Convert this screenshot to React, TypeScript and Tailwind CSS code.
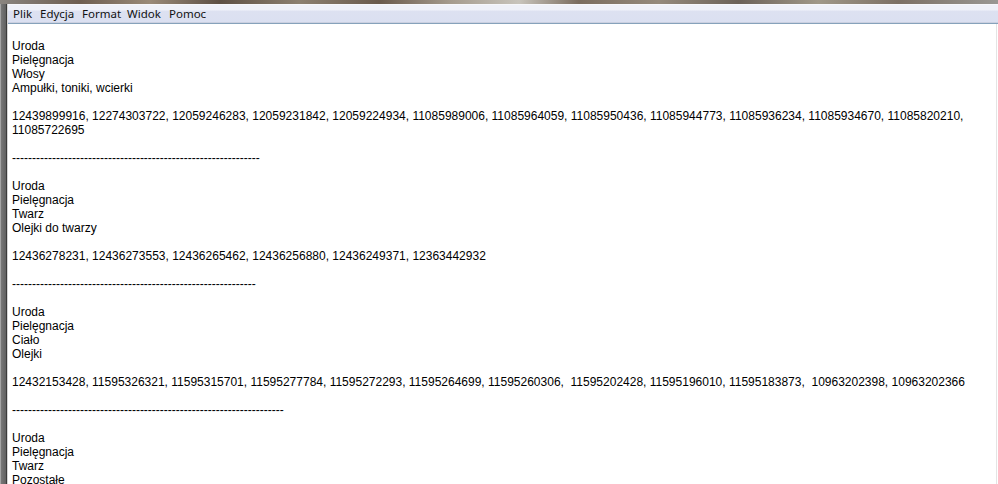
import React from "react";

const MENU: { label: string; w: string }[] = [
  { label: "Plik", w: "w-[27px]" },
  { label: "Edycja", w: "w-[42px]" },
  { label: "Format", w: "w-[45px]" },
  { label: "Widok", w: "w-[42px]" },
  { label: "Pomoc", w: "w-[40px]" },
];

const LINES: string[] = [
  "",
  "Uroda",
  "Pielęgnacja",
  "Włosy",
  "Ampułki, toniki, wcierki",
  "",
  "12439899916, 12274303722, 12059246283, 12059231842, 12059224934, 11085989006, 11085964059, 11085950436, 11085944773, 11085936234, 11085934670, 11085820210,",
  "11085722695",
  "",
  "-".repeat(62),
  "",
  "Uroda",
  "Pielęgnacja",
  "Twarz",
  "Olejki do twarzy",
  "",
  "12436278231, 12436273553, 12436265462, 12436256880, 12436249371, 12363442932",
  "",
  "-".repeat(61),
  "",
  "Uroda",
  "Pielęgnacja",
  "Ciało",
  "Olejki",
  "",
  "12432153428, 11595326321, 11595315701, 11595277784, 11595272293, 11595264699, 11595260306,  11595202428, 11595196010, 11595183873,  10963202398, 10963202366",
  "",
  "-".repeat(68),
  "",
  "Uroda",
  "Pielęgnacja",
  "Twarz",
  "Pozostałe",
];

export default function App() {
  return (
    <div className="w-[998px] h-[484px] overflow-hidden flex flex-col bg-white">
      {/* blurred title bar strip */}
      <div className="h-[4px] shrink-0 bg-[linear-gradient(90deg,#8a8580_0%,#6e5e50_8%,#9a8a78_15%,#5e5044_22%,#8c8070_30%,#6a5a4c_38%,#a49a8c_45%,#c8c4bc_52%,#7a6c5e_58%,#958a7c_66%,#6c6258_74%,#a09888_82%,#7c7064_90%,#9a9894_100%)]" />

      <div className="flex flex-1 min-h-0">
        {/* left window frame */}
        <div className="flex shrink-0">
          <div className="w-[1px] bg-[#a4a4a4]" />
          <div className="w-[5px] bg-[linear-gradient(90deg,#787878,#606060)]" />
          <div className="w-[1px] bg-[#3a3a3a]" />
          <div className="w-[1px] bg-[#d4d4d4]" />
        </div>

        <div className="flex flex-col flex-1 min-w-0">
          {/* menu bar */}
          <div className="h-[20px] shrink-0 flex flex-col">
            <div className="h-[1px] bg-[#f6f7fb]" />
            <div className="flex-1 flex items-center pl-[5px] pt-[1px] bg-[linear-gradient(180deg,#eff1f9_0%,#eff1f9_30%,#dde1f1_35%,#dbe0f1_100%)] font-['Noto_Sans',sans-serif] text-[11.5px] text-[#111]">
              {MENU.map((m) => (
                <span key={m.label} className={`${m.w} shrink-0 leading-[16px]`}>
                  {m.label}
                </span>
              ))}
            </div>
            <div className="h-[2px] bg-[#cbd0e0]" />
            <div className="h-[1px] bg-[#86a2bb]" />
          </div>

          {/* text area */}
          <div className="flex flex-1 min-h-0">
            <div className="flex-1 pt-[1px] pl-[4px] overflow-hidden font-['Liberation_Sans',Arial,sans-serif] text-[12px] leading-[14px] text-black">
              {LINES.map((l, i) => (
                <div key={i} className="h-[14px] whitespace-pre">
                  {l}
                </div>
              ))}
            </div>
            <div className="w-[1px] bg-[#e4e4e4] shrink-0" />
            <div className="w-[1px] bg-white shrink-0" />
          </div>
        </div>
      </div>
    </div>
  );
}
